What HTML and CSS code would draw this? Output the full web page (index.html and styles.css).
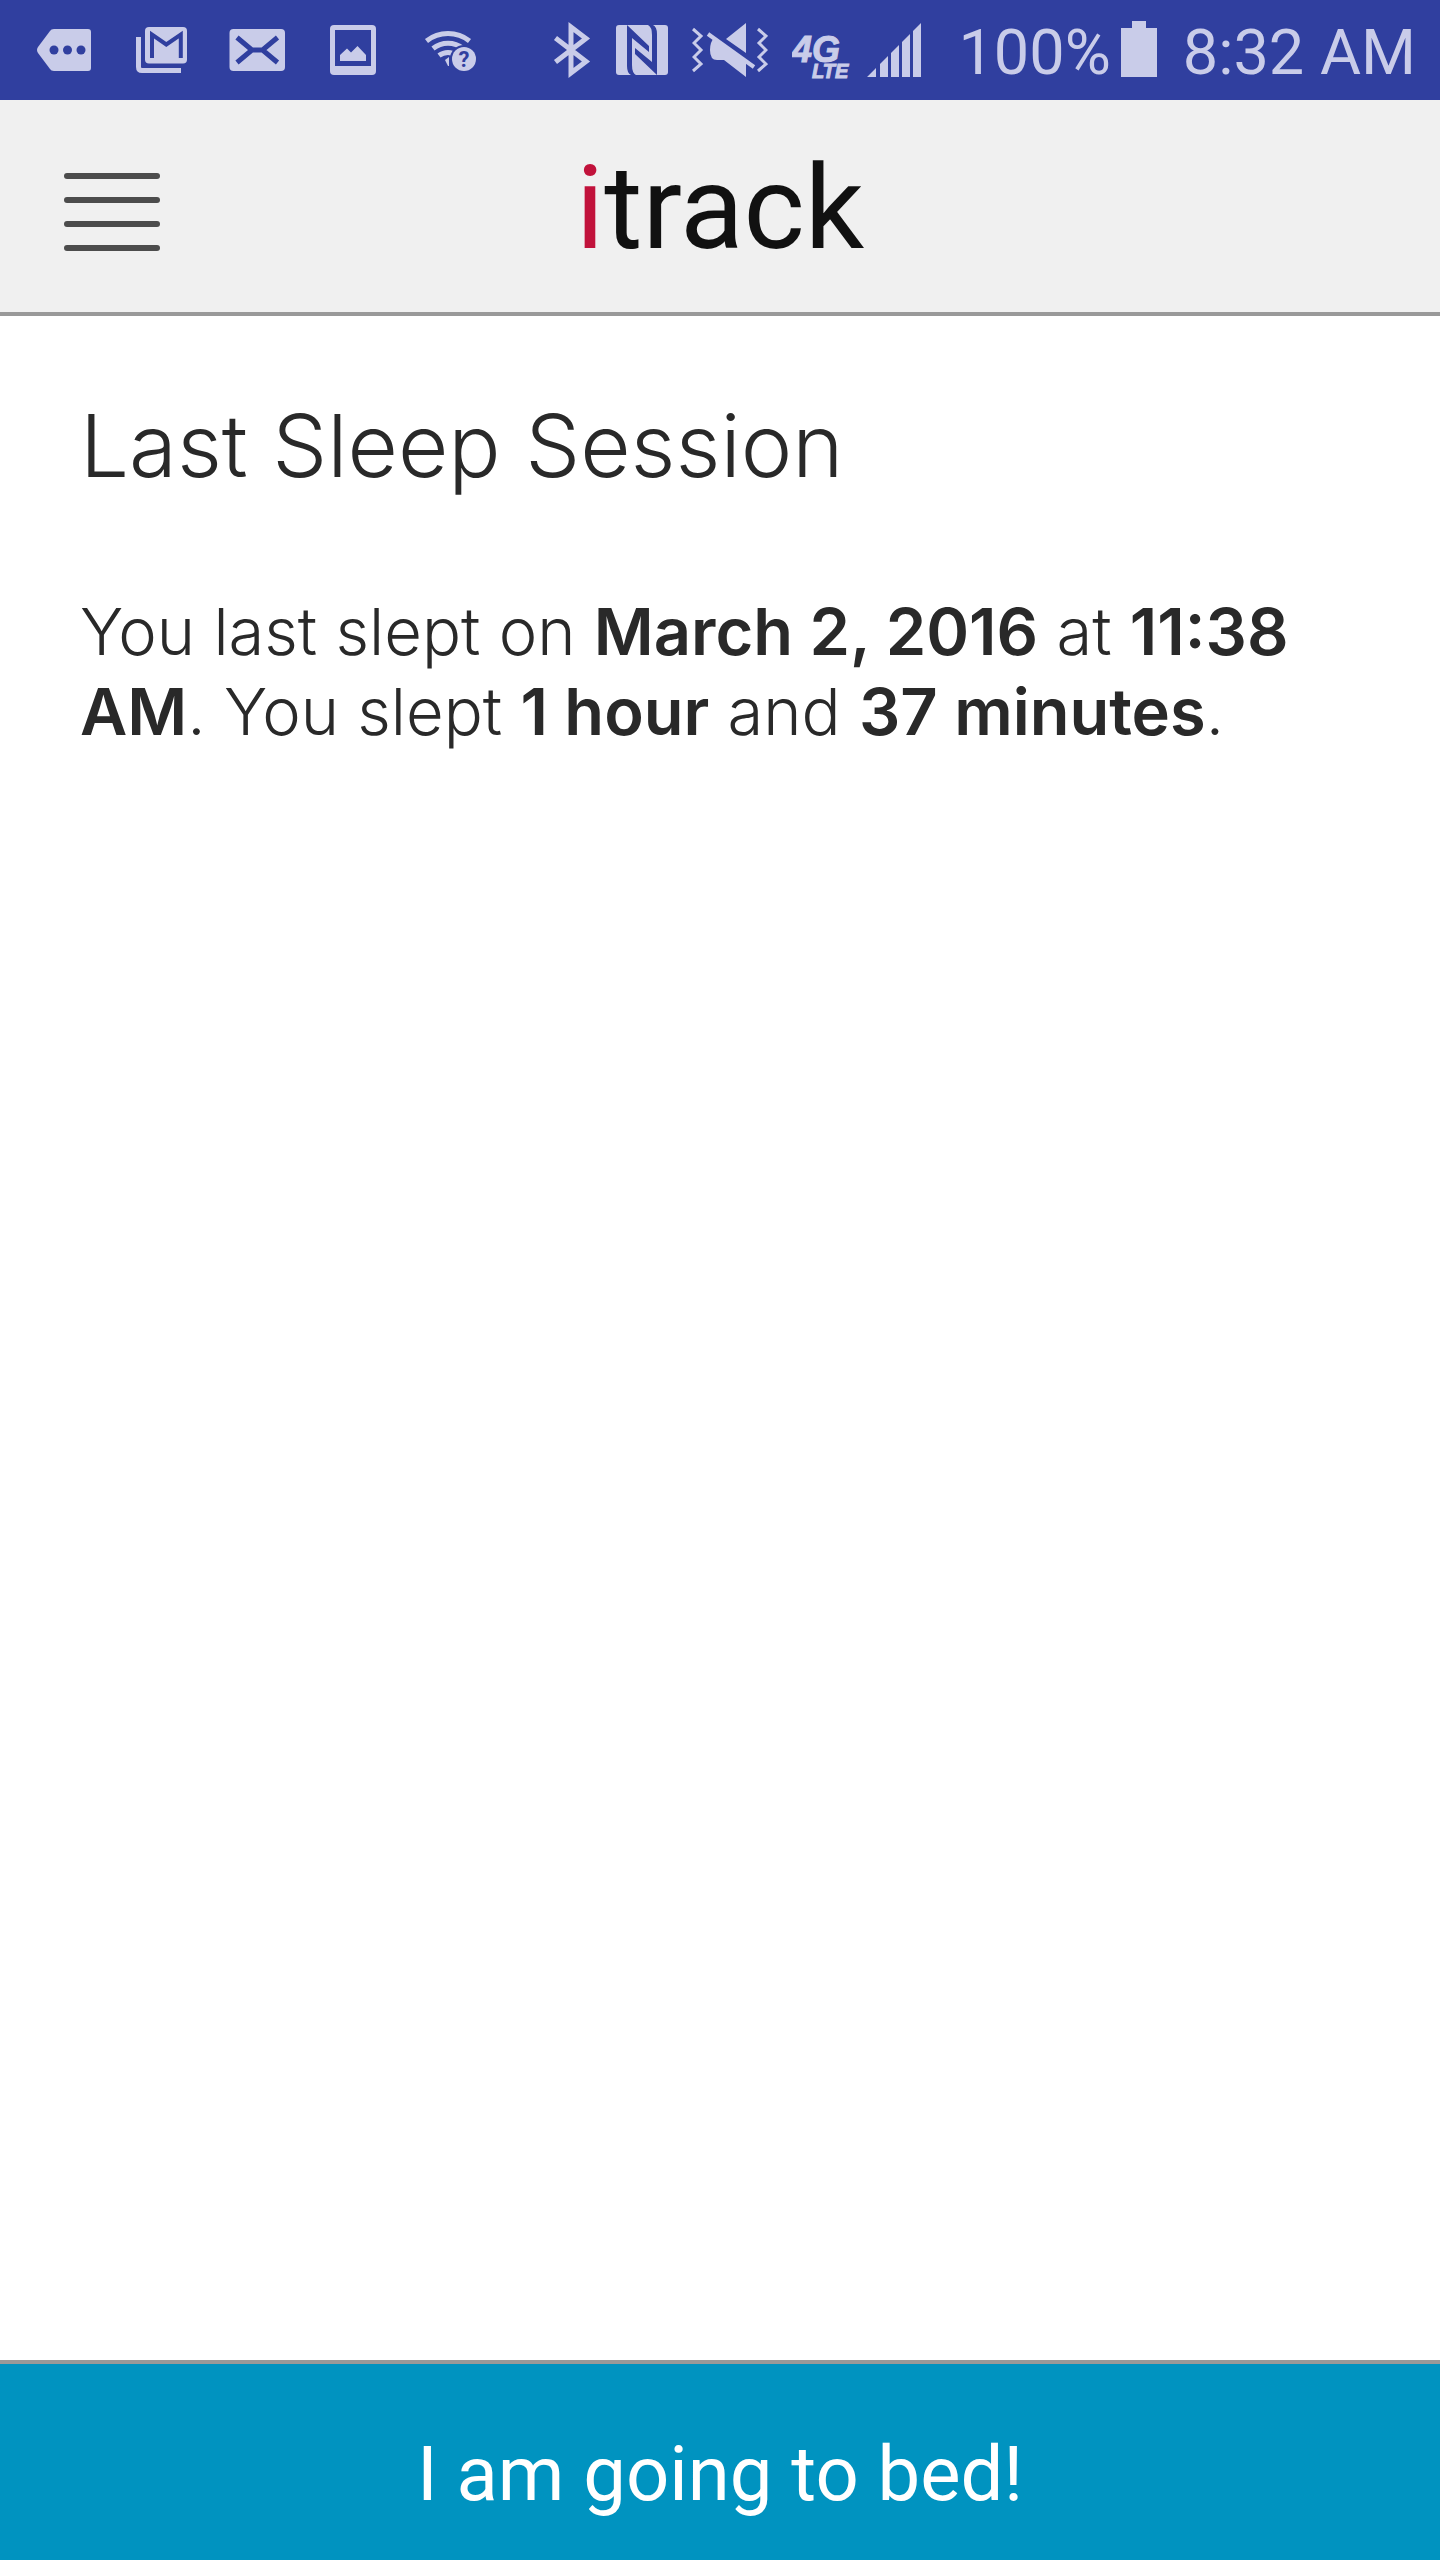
FILE: index.html
```html
<!DOCTYPE html>
<html lang="en">
<head>
    <meta charset="UTF-8">
    <meta name="viewport" content="width=device-width, initial-scale=1.0">
    <title>itrack</title>
    <link rel="stylesheet" href="styles.css">
</head>
<body>

    <div class="status-bar">
        <div class="notifications">
            <!-- more notifications -->
            <svg width="96" height="100" viewBox="0 0 96 100">
                <path class="fill" d="M38 29H72q3 0 3 3V68q0 3-3 3H38q-3 0-4-2L22 53q-2-3 0-6L34 31q1-2 4-2z"/>
                <circle class="cut" cx="38" cy="50" r="4.5"/>
                <circle class="cut" cx="51.5" cy="50" r="4.5"/>
                <circle class="cut" cx="65" cy="50" r="4.5"/>
            </svg>
            <!-- gmail -->
            <svg width="96" height="100" viewBox="0 0 96 100">
                <path class="line" stroke-width="5" d="M26.5 37V67q0 3.5 3.5 3.5H69"/>
                <rect class="fill" x="33" y="27" width="42" height="36.5" rx="4"/>
                <path class="cut-line" stroke-width="4" d="M40 58V34.5L54.3 44.5 68.8 34.5V58"/>
            </svg>
            <!-- mail -->
            <svg width="96" height="100" viewBox="0 0 96 100">
                <rect class="fill" x="21.5" y="29" width="55.5" height="42" rx="4"/>
                <path class="cut-line" stroke-width="5" d="M29 37.5L44 50 29 62.5M69.5 37.5L54.5 50 69.5 62.5M44 50H54.5"/>
            </svg>
            <!-- picture -->
            <svg width="96" height="100" viewBox="0 0 96 100">
                <rect class="fill" x="26" y="25" width="46" height="50" rx="4"/>
                <rect class="cut" x="31" y="30" width="36" height="36"/>
                <path class="fill" d="M36 61V55L43 48.5 47 52.5 53.5 46 62 55V61z"/>
            </svg>
            <!-- wifi help -->
            <svg width="96" height="100" viewBox="0 0 96 100">
                <path class="line" stroke-width="5" d="M26.5 41A35 35 0 0 1 69.5 41M33 48.5A24 24 0 0 1 63 48.5M39 55.5A15 15 0 0 1 57 55.5"/>
                <path class="fill" d="M45 60L49 57V66H48z"/>
                <circle class="cut" cx="64" cy="59" r="14"/>
                <circle class="fill" cx="64" cy="59" r="12"/>
                <text class="help-mark" x="64" y="67" text-anchor="middle">?</text>
            </svg>
        </div>
        <div class="system">
            <!-- bluetooth -->
            <svg width="40" height="100" viewBox="0 0 40 100">
                <path class="line" stroke-width="5" d="M3.5 38L34 61.5 19 73V27L34 38.5 3.5 62"/>
            </svg>
            <!-- nfc -->
            <svg width="52" height="100" viewBox="0 0 52 100">
                <rect class="fill" width="52" height="50" y="25" rx="3"/>
                <path class="cut" d="M11 25L33 46V52L16 38V65Q16 73 20 75H15Q11 73 11 66z"/>
                <path class="cut" d="M41 75L19 54V48L36 62V35Q36 27 32 25H37Q41 27 41 34z"/>
            </svg>
            <!-- sound off -->
            <svg width="76" height="100" viewBox="0 0 76 100">
                <path class="line" stroke-width="3" d="M1 29L9 36 2 43 9 50 2 57 9 64 1 71M66 29L74 36 67 43 74 50 67 57 74 64 66 71"/>
                <path class="fill" d="M54 23V53L34 39zM54 77L32 60H25Q18 60 18 50 18 42 22 38L54 61z"/>
                <path class="line" stroke-width="4" d="M16 34L62 67"/>
            </svg>
            <!-- 4G LTE -->
            <svg width="60" height="100" viewBox="0 0 60 100">
                <text class="net-4g" x="0" y="62">4G</text>
                <text class="net-lte" x="20" y="78">LTE</text>
            </svg>
            <!-- signal -->
            <svg class="signal" width="56" height="100" viewBox="0 0 56 100">
                <path class="fill" d="M1 77L10 68V77zM14 77V64L22 56V77zM25 77V53L33 45V77zM36 77V42L44 34V77zM47 77V31L55 23V77z"/>
            </svg>
            <span class="percent">100%</span>
            <svg class="battery" width="36" height="100" viewBox="0 0 36 100">
                <path class="fill" d="M0 28H11V21H25V28H36V77H0z"/>
            </svg>
            <span class="clock">8:32 AM</span>
        </div>
    </div>

    <header>
        <button class="menu-btn" type="button" aria-label="Menu">
            <span></span>
            <span></span>
            <span></span>
            <span></span>
        </button>
        <h1><span class="brand-i">i</span>track</h1>
    </header>

    <main>
        <h2>Last Sleep Session</h2>
        <p>You last slept on <strong>March 2, 2016</strong> at <strong>11:38 AM</strong>. You slept <strong>1 hour</strong> and <strong>37 minutes</strong>.</p>
    </main>

    <button class="sleep-btn" type="button">I am going to bed!</button>

</body>
</html>
```

FILE: styles.css
```css
body {
    font-family: Roboto, sans-serif;
    margin: 0;
    min-height: 100vh;
    display: flex;
    flex-direction: column;
    background-color: #fff;
    color: #292929;
}

svg {
    display: block;
    flex: none;
}

/* status bar */
.status-bar {
    display: flex;
    justify-content: space-between;
    height: 100px;
    padding: 0 24px 0 16px;
    background-color: #303f9f;
    color: #c9cce9;
    font-size: 64px;
    font-weight: 300;
    line-height: 106px;
    white-space: nowrap;
}

.notifications, .system {
    display: flex;
}

.system {
    gap: 24px;
}

.signal {
    margin-left: -10px;
}

.percent {
    margin-left: 12px;
}

.battery {
    margin-left: -14px;
}

.clock {
    margin-left: 2px;
}

.fill {
    fill: #c9cce9;
}

.cut {
    fill: #303f9f;
}

.line {
    fill: none;
    stroke: #c9cce9;
}

.cut-line {
    fill: none;
    stroke: #303f9f;
}

.percent, .clock {
    font-size: 63px;
    font-weight: 400;
}

.help-mark {
    fill: #303f9f;
    font-size: 22px;
    font-weight: 700;
}

.net-4g, .net-lte {
    fill: #c9cce9;
    stroke: #c9cce9;
    font-family: "Liberation Sans", sans-serif;
    font-style: italic;
    font-weight: 700;
}

.net-4g {
    font-size: 36px;
}

.net-lte {
    font-size: 20px;
}

/* header */
header {
    display: grid;
    grid-template-columns: 1fr auto 1fr;
    align-items: center;
    height: 208px;
    padding: 4px 64px 0;
    background-color: #f0f0f0;
    border-bottom: 4px solid #999;
}

.menu-btn {
    display: flex;
    flex-direction: column;
    gap: 18px;
    width: 96px;
    padding: 8px 0 0;
    border: none;
    background: none;
    cursor: pointer;
}

.menu-btn span {
    height: 6px;
    border-radius: 3px;
    background-color: #4c4c4c;
}

h1 {
    margin: 0;
    font-size: 117px;
    font-weight: 400;
    line-height: 140px;
    color: #111;
}

.brand-i {
    color: #c1123b;
}

/* content */
main {
    flex: 1;
    padding: 78px 80px;
    font-family: Inter, sans-serif;
}

h2 {
    margin: 0;
    font-size: 87px;
    font-weight: 300;
    line-height: 104px;
}

p {
    margin: 94px 0 0;
    font-size: 65px;
    font-weight: 300;
    line-height: 80px;
}

strong {
    font-weight: 600;
}

.sleep-btn {
    height: 200px;
    padding: 24px 0 0;
    border: none;
    border-top: 4px solid #999;
    background-color: #0093c0;
    color: #fff;
    font-family: Roboto, sans-serif;
    font-size: 76px;
    cursor: pointer;
}
```
